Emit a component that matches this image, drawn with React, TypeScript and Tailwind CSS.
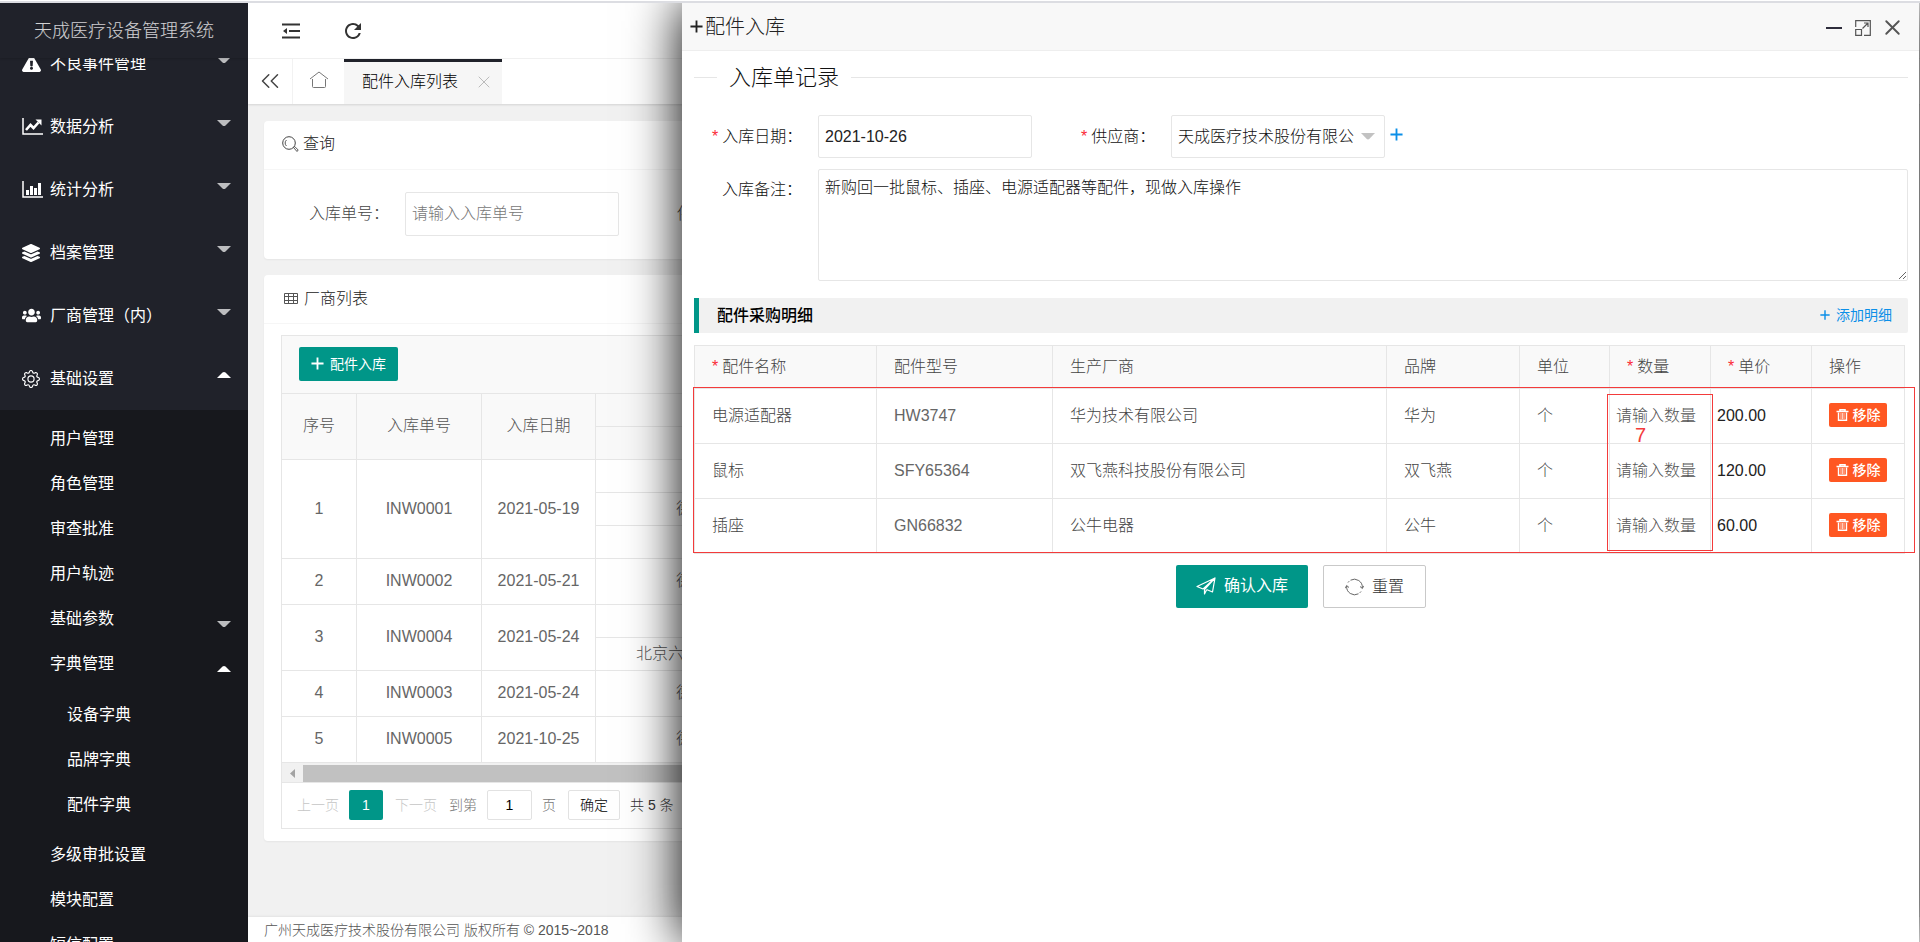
import type { ReactNode } from "react";
import { FaExclamationTriangle, FaLayerGroup, FaUsers } from "react-icons/fa";
import { BsGear } from "react-icons/bs";
import { MdRefresh } from "react-icons/md";
import { ChevronsLeft, X } from "lucide-react";

// === Icons ===
const LineChartIcon = () => (
  <svg width="21" height="17" viewBox="0 0 21 17" fill="none">
    <path d="M1 0v16h20" stroke="currentColor" strokeWidth="1.5" />
    <path d="M4 12l4.500-5 3 3 5-5.500" stroke="currentColor" strokeWidth="2.600" />
    <path d="M13.500 1.500h6v6z" fill="currentColor" />
  </svg>
);

const BarChartIcon = () => (
  <svg width="21" height="17" viewBox="0 0 21 17">
    <path d="M1 0v16h20" fill="none" stroke="currentColor" strokeWidth="1.500" />
    <path d="M4 9h3v5H4zM8 5h3v9H8zM12 7h3v7h-3zM16 2h3v12h-3z" fill="currentColor" />
  </svg>
);

const FoldIcon = () => (
  <svg width="18" height="16" viewBox="0 0 18 16" fill="#333">
    <path d="M0 .5h18v2H0zM7 7h11v2H7zM0 13.500h18v2H0zM1 8l4-3v6z" />
  </svg>
);

const HomeIcon = () => (
  <svg width="20" height="18" viewBox="0 0 20 18" fill="none" stroke="#777">
    <path d="M1 8l9-7 9 7M3.500 8v7.500q0 1 1 1h11q1 0 1-1V8" />
  </svg>
);

const SearchIcon = () => (
  <svg width="17" height="17" viewBox="0 0 17 17" fill="none" stroke="#444">
    <circle cx="7" cy="7" r="6.300" />
    <path d="M4.500 4a4 4 0 0 0 0 6M11.500 11.500l1.200-1 3.500 3.500-1.200 1.500z" strokeWidth="0.900" />
  </svg>
);

const GridIcon = () => (
  <svg width="14" height="12" viewBox="0 0 14 12" fill="none" stroke="#555">
    <path d="M.5.500h13v10H.5zM.5 3.500h13M.5 7.500h13M4.500.500v10M9.500.500v10" />
  </svg>
);

const PlusIcon = ({ size }: { size: number }) => (
  <svg width={size} height={size} viewBox="0 0 14 14" fill="none" stroke="currentColor" strokeWidth="2">
    <path d="M7 .5v13M.5 7h13" />
  </svg>
);

const SendIcon = () => (
  <svg width="20" height="18" viewBox="0 0 20 18" fill="none" stroke="currentColor" strokeWidth="1.200" strokeLinejoin="round">
    <path d="M19 1L1 9.500l6 2.500L19 1l-2.500 14-6-2.500M19 1L8.500 12.500V17l2-4" />
  </svg>
);

const ResetIcon = () => (
  <svg width="19" height="18" viewBox="0 0 19 18" fill="none" stroke="#666">
    <path d="M5.500 2.200A8 8 0 0 1 17.300 10M13.500 15.800A8 8 0 0 1 1.700 8M15 8.500l2.400 2 1.200-2.600M.4 10.200L1.600 7.500l2.400 2M3 4.500l1.200-1.300M16 13.500l-1.200 1.300" />
  </svg>
);

const TrashIcon = () => (
  <svg width="13" height="12" viewBox="0 0 13 12" fill="none" stroke="currentColor">
    <path d="M.5 2.500h12M4 2V.8h5V2" strokeWidth="1.600" />
    <path d="M2.500 3.500v7.700h8V3.500" strokeWidth="1.400" />
    <path d="M5 4v6M6.500 4v6M8 4v6" strokeWidth="0.700" />
  </svg>
);

const MaximizeIcon = () => (
  <svg width="16" height="16" viewBox="0 0 16 16" fill="none" stroke="#555">
    <path d="M.7 7V.7h14.600v14.600H9M.7 9.500h5.800v5.800H.7zM7.500 8.500l5-5M9 3h4v4" strokeWidth="1.200" />
  </svg>
);

function Caret({ up = false }: { up?: boolean }) {
  return (
    <svg width="14" height="6" viewBox="0 0 14 6" className={up ? "rotate-180 text-white" : "text-[#bcbdbf]"}>
      <path d="M0 0h14L8.500 5.500q-1.500 1-3 0z" fill="currentColor" />
    </svg>
  );
}

// === Data ===
const menus = [
  { name: "不良事件管理", icon: <FaExclamationTriangle size={19} /> },
  { name: "数据分析", icon: <LineChartIcon /> },
  { name: "统计分析", icon: <BarChartIcon /> },
  { name: "档案管理", icon: <FaLayerGroup size={18} /> },
  { name: "厂商管理（内）", icon: <FaUsers size={19} /> },
  { name: "基础设置", icon: <BsGear size={18} />, open: true },
];

const orders = [
  { no: "INW0001", date: "2021-05-19", vendors: ["", "德", ""] },
  { no: "INW0002", date: "2021-05-21", vendors: ["德"] },
  { no: "INW0004", date: "2021-05-24", vendors: ["", "北京六"] },
  { no: "INW0003", date: "2021-05-24", vendors: ["德"] },
  { no: "INW0005", date: "2021-10-25", vendors: ["德"] },
];

const parts = [
  { name: "电源适配器", model: "HW3747", maker: "华为技术有限公司", brand: "华为", unit: "个", price: "200.00" },
  { name: "鼠标", model: "SFY65364", maker: "双飞燕科技股份有限公司", brand: "双飞燕", unit: "个", price: "120.00" },
  { name: "插座", model: "GN66832", maker: "公牛电器", brand: "公牛", unit: "个", price: "60.00" },
];

const Star = () => <span className="mr-1 text-red-500">*</span>;

function SubItem({ children, nested = false, caret }: { children: ReactNode; nested?: boolean; caret?: "up" | "down" }) {
  return (
    <li>
      <a href="#" className={`flex h-[45px] items-center justify-between pr-[17px] ${nested ? "pl-[67px]" : "pl-[50px]"}`}>
        {children}
        {caret && <span className="pt-2.5"><Caret up={caret === "up"} /></span>}
      </a>
    </li>
  );
}

function Sidebar() {
  return (
    <aside className="flex w-[248px] shrink-0 flex-col overflow-hidden bg-[#20222a] font-normal text-white">
      <div className="relative z-10 flex h-[55px] shrink-0 items-center justify-center bg-[#20222a] text-lg font-light text-white/80 shadow-[0_1px_2px_rgba(0,0,0,0.15)]">
        天成医疗设备管理系统
      </div>
      <nav className="min-h-0 flex-1">
        <ul className="-mt-[26px]">
          {menus.map((m) => (
            <li key={m.name}>
              <a href="#" className="flex h-[63px] items-center pr-[17px] pl-[22px]">
                <span className="w-7">{m.icon}</span>
                <span className="flex-1">{m.name}</span>
                <span className="pb-2"><Caret up={m.open} /></span>
              </a>
            </li>
          ))}
        </ul>
        <ul className="bg-[#17181d] py-1.5">
          <SubItem>用户管理</SubItem>
          <SubItem>角色管理</SubItem>
          <SubItem>审查批准</SubItem>
          <SubItem>用户轨迹</SubItem>
          <SubItem caret="down">基础参数</SubItem>
          <SubItem caret="up">字典管理</SubItem>
          <li>
            <ul className="pt-1.5 pb-[5px]">
              <SubItem nested>设备字典</SubItem>
              <SubItem nested>品牌字典</SubItem>
              <SubItem nested>配件字典</SubItem>
            </ul>
          </li>
          <SubItem>多级审批设置</SubItem>
          <SubItem>模块配置</SubItem>
          <SubItem>短信配置</SubItem>
        </ul>
      </nav>
    </aside>
  );
}

function OrderTable() {
  return (
    <table className="w-[1200px] table-fixed border-collapse text-center text-[#555]">
      <colgroup>
        <col className="w-[75px]" />
        <col className="w-[125px]" />
        <col className="w-[114px]" />
        <col />
      </colgroup>
      <thead className="bg-[#f9f9f9]">
        <tr className="h-8">
          {["序号", "入库单号", "入库日期"].map((h) => (
            <th key={h} rowSpan={2} className="border border-t-0 border-[#e6e6e6] font-light">{h}</th>
          ))}
          <th className="border border-t-0 border-[#e6e6e6]" />
        </tr>
        <tr className="h-[33px]">
          <th className="border border-[#e6e6e6]" />
        </tr>
      </thead>
      <tbody>
        {orders.map((o, i) =>
          o.vendors.map((v, j) => (
            <tr key={o.no + j} className={o.vendors.length > 1 ? "h-[33px]" : "h-[46px]"}>
              {j === 0 && (
                <>
                  <td rowSpan={o.vendors.length} className="border border-[#e6e6e6] text-[#666]">{i + 1}</td>
                  <td rowSpan={o.vendors.length} className="border border-[#e6e6e6] text-[#666]">{o.no}</td>
                  <td rowSpan={o.vendors.length} className="border border-[#e6e6e6] text-[#666]">{o.date}</td>
                </>
              )}
              <td className={`border border-[#e6e6e6] text-left ${v.length > 1 ? "pl-10" : "pl-20"}`}>{v}</td>
            </tr>
          ))
        )}
      </tbody>
    </table>
  );
}

function MainPage() {
  return (
    <main className="flex min-w-0 flex-1 flex-col bg-[#f1f1f1]">
      <header className="flex h-[56px] shrink-0 items-center gap-[41px] border-b border-[#f2f2f2] bg-white pl-[34px]">
        <button aria-label="收起菜单"><FoldIcon /></button>
        <button aria-label="刷新"><MdRefresh size={24} color="#333" /></button>
      </header>
      <div className="flex h-[45px] shrink-0 bg-white shadow-[0_1px_2px_rgba(0,0,0,0.12)]">
        <button aria-label="向左" className="flex w-[45px] items-center justify-center border-r border-[#f2f2f2] pb-0.5">
          <ChevronsLeft size={30} strokeWidth={1.2} color="#444" />
        </button>
        <button aria-label="主页" className="flex w-[51px] items-center justify-center pb-1"><HomeIcon /></button>
        <div className="flex w-[158px] items-center justify-between border-t-[3px] border-[#20222a] bg-[#f6f6f6] pr-2 pb-0.5 pl-[18px] text-black">
          <span>配件入库列表</span>
          <button aria-label="关闭标签"><X size={20} strokeWidth={1.2} color="#bbb" /></button>
        </div>
      </div>

      <section className="mx-4 mt-[17px] rounded-sm bg-white shadow-[0_1px_2px_rgba(0,0,0,0.05)]">
        <h2 className="flex h-[49px] items-center gap-1 border-b border-[#f6f6f6] pb-0.5 pl-[18px] text-[#222]">
          <SearchIcon />查询
        </h2>
        <div className="flex h-[89px] items-center pb-0.5 pl-[45px] text-[#444]">
          <label htmlFor="orderNo" className="w-24">入库单号：</label>
          <input id="orderNo" placeholder="请输入入库单号" className="h-11 w-[214px] rounded-xs border border-[#e6e6e6] px-1.5 placeholder:text-[#777]" />
          <label className="ml-[58px] shrink-0">供应商：</label>
        </div>
      </section>

      <section className="mx-4 mt-4 rounded-sm bg-white pb-3 shadow-[0_1px_2px_rgba(0,0,0,0.05)]">
        <h2 className="flex h-[49px] items-center gap-1.5 border-b border-[#f6f6f6] pl-5 text-[#222]">
          <GridIcon />厂商列表
        </h2>
        <div className="mx-[17px] mt-[11px] overflow-hidden border border-[#e6e6e6]">
          <div className="flex h-[58px] items-center border-b border-[#e6e6e6] bg-[#f9f9f9] pb-0.5 pl-[17px]">
            <button className="flex h-[34px] items-center gap-1.5 rounded-xs bg-[#009688] px-3 text-sm font-normal text-white whitespace-nowrap">
              <PlusIcon size={13} />配件入库
            </button>
          </div>
          <div className="-ml-px">
            <OrderTable />
          </div>
          <div className="flex h-5 items-end border-b border-[#e6e6e6] bg-[#f1f1f1]">
            <svg width="21" height="17" viewBox="0 0 21 17"><path d="M13 4v9L8 8.500z" fill="#a3a3a3" /></svg>
            <div className="h-[17px] flex-1 bg-[#c1c1c1]" />
          </div>
          <div className="flex h-[45px] items-center text-sm whitespace-nowrap">
            <a href="#" className="ml-[15px] text-[#c6c6c6]">上一页</a>
            <span className="ml-2.5 flex h-[30px] w-[34px] items-center justify-center rounded-xs bg-[#009688] text-white">1</span>
            <a href="#" className="ml-3 text-[#c6c6c6]">下一页</a>
            <label htmlFor="pageNo" className="ml-3 text-[#777]">到第</label>
            <input id="pageNo" defaultValue="1" className="ml-2.5 h-[30px] w-[45px] rounded-xs border border-[#e2e2e2] text-center text-black" />
            <span className="ml-2.5 text-[#777]">页</span>
            <button className="ml-3 h-[30px] w-[52px] rounded-xs border border-[#e2e2e2] text-black">确定</button>
            <span className="ml-2.5 text-[#333]">共 5 条</span>
          </div>
        </div>
      </section>

      <footer className="mt-auto h-[25px] shrink-0 bg-white pl-4 text-sm leading-[26px] text-[#555] shadow-[0_-1px_2px_rgba(0,0,0,0.06)]">
        广州天成医疗技术股份有限公司 版权所有 © 2015~2018
      </footer>
    </main>
  );
}

function PartsTable() {
  const cell = "border border-[#e6e6e6] pl-[17px]";
  return (
    <div className="relative mt-3 mr-[3px]">
      <table className="w-full table-fixed border-collapse text-left text-[#444]">
        <colgroup>
          <col className="w-[182px]" />
          <col className="w-[176px]" />
          <col className="w-[334px]" />
          <col className="w-[133px]" />
          <col className="w-[90px]" />
          <col className="w-[101px]" />
          <col className="w-[101px]" />
          <col />
        </colgroup>
        <thead className="bg-[#f9f9f9]">
          <tr className="h-[43px]">
            <th className={`${cell} font-light`}><Star />配件名称</th>
            <th className={`${cell} font-light`}>配件型号</th>
            <th className={`${cell} font-light`}>生产厂商</th>
            <th className={`${cell} font-light`}>品牌</th>
            <th className={`${cell} font-light`}>单位</th>
            <th className={`${cell} font-light`}><Star />数量</th>
            <th className={`${cell} font-light`}><Star />单价</th>
            <th className={`${cell} font-light`}>操作</th>
          </tr>
        </thead>
        <tbody>
          {parts.map((p) => (
            <tr key={p.model} className="h-[55px]">
              <td className={cell}>{p.name}</td>
              <td className={`${cell} text-[#666]`}>{p.model}</td>
              <td className={cell}>{p.maker}</td>
              <td className={cell}>{p.brand}</td>
              <td className={cell}>{p.unit}</td>
              <td className="border border-[#e6e6e6] px-1.5">
                <input aria-label="数量" placeholder="请输入数量" className="w-full placeholder:text-[#555]" />
              </td>
              <td className="border border-[#e6e6e6] px-1.5">
                <input aria-label="单价" defaultValue={p.price} className="w-full text-[#222]" />
              </td>
              <td className={cell}>
                <button className="mb-0.5 flex h-6 w-[58px] items-center justify-center gap-1 rounded-xs bg-[#ff5722] text-sm font-medium text-white">
                  <TrashIcon />移除
                </button>
              </td>
            </tr>
          ))}
        </tbody>
      </table>
      {/* Red annotation frames */}
      <div className="pointer-events-none absolute top-[42px] -right-[10px] bottom-px -left-px border border-[#f33b3b]">
        <div className="absolute top-1.5 right-[201px] bottom-px w-[106px] border border-[#f33b3b]">
          <span className="absolute top-7 left-[27px] text-xl leading-6 text-[#f33b3b]">7</span>
        </div>
      </div>
    </div>
  );
}

function StockInDialog() {
  return (
    <div role="dialog" aria-label="配件入库" className="absolute top-0 right-px bottom-0 left-[682px] bg-white shadow-[0_0_50px_#000]">
      <div className="flex h-12 items-center justify-between border-b border-[#eee] bg-[#f8f8f8] pr-3.5 pl-2 text-[#222]">
        <h1 className="flex items-center gap-0.5 text-xl"><PlusIcon size={13} />配件入库</h1>
        <div className="flex items-center gap-[9px] pt-0.5">
          <button aria-label="最小化" className="mr-1 h-0.5 w-4 bg-[#2e2d3c]" />
          <button aria-label="最大化"><MaximizeIcon /></button>
          <button aria-label="关闭"><X size={25} strokeWidth={1.8} color="#555" /></button>
        </div>
      </div>

      <form className="pr-[11px] pl-3 text-[#111]" onSubmit={(e) => e.preventDefault()}>
        <div className="flex h-[52px] items-center text-[22px]">
          <span className="h-px w-[23px] bg-[#e6e6e6]" />
          <span className="px-3">入库单记录</span>
          <span className="h-px flex-1 bg-[#e6e6e6]" />
        </div>

        <div className="mt-3 flex items-center">
          <label htmlFor="inDate" className="w-[124px] pl-[18px]"><Star />入库日期：</label>
          <input id="inDate" defaultValue="2021-10-26" className="h-[43px] w-[214px] rounded-xs border border-[#e6e6e6] px-1.5 text-[#222]" />
          <label htmlFor="supplier" className="ml-[49px] w-[90px]"><Star />供应商：</label>
          <div className="relative">
            <select id="supplier" className="h-[43px] w-[214px] appearance-none rounded-xs border border-[#e6e6e6] bg-white pr-[30px] pl-1.5">
              <option>天成医疗技术股份有限公司</option>
            </select>
            <svg width="14" height="7" viewBox="0 0 14 7" className="pointer-events-none absolute top-[18px] right-2.5">
              <path d="M0 0h14L8.500 5.800q-1.500 1.200-3 0z" fill="#c2c2c2" />
            </svg>
          </div>
          <button type="button" aria-label="新增供应商" className="mb-1 ml-[5px] text-[#0b8fe8]"><PlusIcon size={13} /></button>
        </div>

        <div className="mt-[11px] flex">
          <label htmlFor="remark" className="w-[124px] shrink-0 pt-[9px] pl-7">入库备注：</label>
          <textarea id="remark" defaultValue="新购回一批鼠标、插座、电源适配器等配件，现做入库操作" className="h-28 flex-1 resize rounded-xs border border-[#e6e6e6] px-1.5 py-1.5 leading-6" />
        </div>

        <div className="mt-[17px] flex h-[35px] items-center justify-between rounded-r-xs border-l-[5px] border-[#009688] bg-[#f1f1f1] pr-4 pl-[18px]">
          <h2 className="font-medium text-black">配件采购明细</h2>
          <button type="button" className="flex items-center gap-1.5 pb-0.5 text-sm font-normal text-[#0b8fe8]"><PlusIcon size={10} />添加明细</button>
        </div>

        <PartsTable />

        <div className="mt-[11px] flex justify-center gap-[15px]">
          <button type="submit" className="flex h-[43px] w-[132px] items-center justify-center gap-2 rounded-xs bg-[#009688] pb-0.5 font-normal text-white">
            <SendIcon />确认入库
          </button>
          <button type="reset" className="flex h-[43px] w-[103px] items-center justify-center gap-2 rounded-xs border border-[#c9c9c9] bg-white text-[#333]">
            <ResetIcon />重置
          </button>
        </div>
      </form>
    </div>
  );
}

export default function App() {
  return (
    <div className="flex h-screen flex-col overflow-hidden font-['Liberation_Sans','Noto_Sans_CJK_SC',sans-serif] text-base font-light">
      <div className="h-[3px] shrink-0 border-t border-white bg-[#dcdde2]" />
      <div className="relative flex min-h-0 flex-1 overflow-hidden">
        <Sidebar />
        <MainPage />
        <StockInDialog />
      </div>
    </div>
  );
}
